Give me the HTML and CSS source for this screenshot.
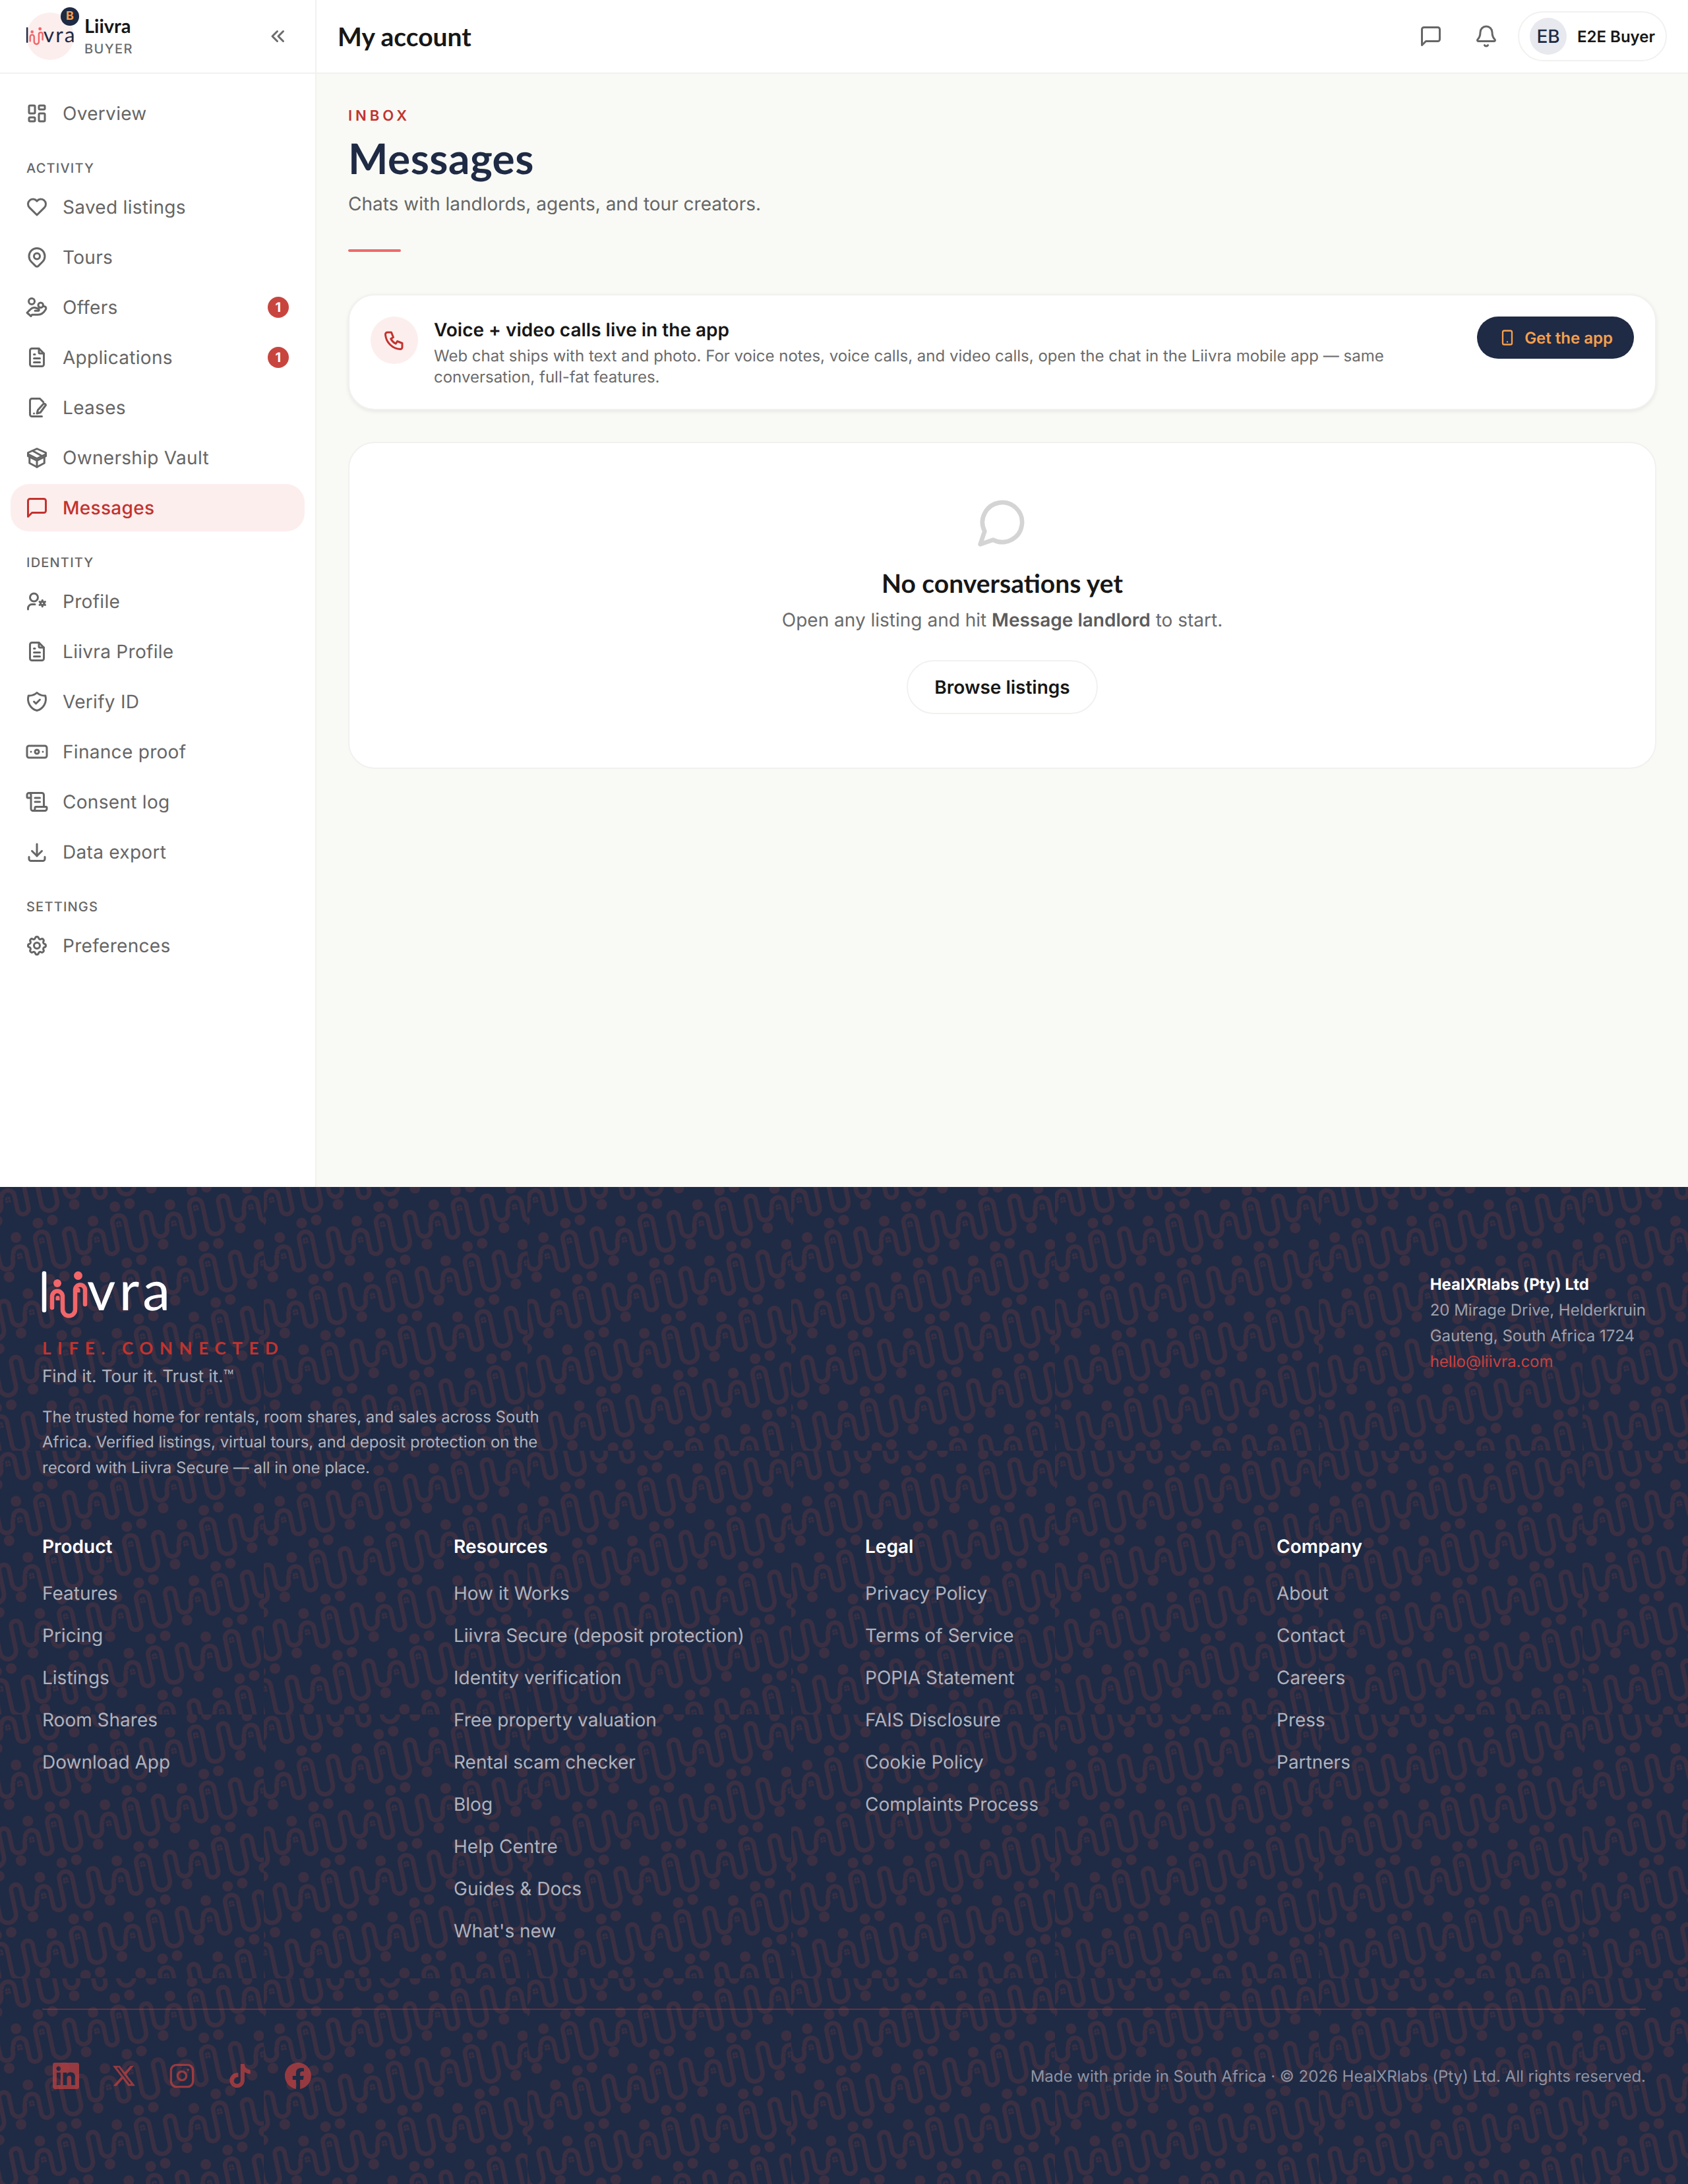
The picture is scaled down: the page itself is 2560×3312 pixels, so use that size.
FILE: index.html
```html
<!DOCTYPE html>
<html lang="en">
<head>
    <meta charset="UTF-8">
    <meta name="viewport" content="width=device-width, initial-scale=1.0">
    <title>Messages - Liivra</title>
    <link rel="stylesheet" href="styles.css">
</head>
<body>
    <div class="app">
        <aside class="sidebar">
            <div class="side-head">
                <div class="side-logo">
                    <svg class="logo-mark" viewBox="0 0 190 72" width="72" height="28">
                        <path class="logo-l" d="M3 3V59"/>
                        <circle class="logo-dot" cx="23" cy="18" r="6"/>
                        <circle class="logo-dot" cx="54.5" cy="6.5" r="6.5"/>
                        <path class="logo-body" d="M15 55V38a8 8 0 0 1 16 0V58a9.5 9.5 0 0 0 19 0V28a7.5 7.5 0 0 1 15 0V50"/>
                        <text class="logo-text" x="68" y="59" textLength="126">vra</text>
                    </svg>
                    <span class="role-dot">B</span>
                </div>
                <div class="brand">
                    <div class="brand-name">Liivra</div>
                    <div class="brand-role">BUYER</div>
                </div>
                <svg class="ic collapse" viewBox="0 0 24 24"><path d="M11 7l-5 5l5 5"/><path d="M17 7l-5 5l5 5"/></svg>
            </div>
            <nav class="nav">
                <a class="nav-item">
                    <svg class="ic" viewBox="0 0 24 24"><path d="M5 4h4a1 1 0 0 1 1 1v6a1 1 0 0 1 -1 1h-4a1 1 0 0 1 -1 -1v-6a1 1 0 0 1 1 -1"/><path d="M5 16h4a1 1 0 0 1 1 1v2a1 1 0 0 1 -1 1h-4a1 1 0 0 1 -1 -1v-2a1 1 0 0 1 1 -1"/><path d="M15 12h4a1 1 0 0 1 1 1v6a1 1 0 0 1 -1 1h-4a1 1 0 0 1 -1 -1v-6a1 1 0 0 1 1 -1"/><path d="M15 4h4a1 1 0 0 1 1 1v2a1 1 0 0 1 -1 1h-4a1 1 0 0 1 -1 -1v-2a1 1 0 0 1 1 -1"/></svg>
                    Overview
                </a>

                <div class="nav-label">ACTIVITY</div>
                <a class="nav-item">
                    <svg class="ic" viewBox="0 0 24 24"><path d="M19.5 12.572l-7.5 7.428l-7.5 -7.428a5 5 0 1 1 7.5 -6.566a5 5 0 1 1 7.5 6.572"/></svg>
                    Saved listings
                </a>
                <a class="nav-item">
                    <svg class="ic" viewBox="0 0 24 24"><path d="M9 11a3 3 0 1 0 6 0a3 3 0 0 0 -6 0"/><path d="M17.657 16.657l-4.243 4.243a2 2 0 0 1 -2.827 0l-4.244 -4.243a8 8 0 1 1 11.314 0z"/></svg>
                    Tours
                </a>
                <a class="nav-item">
                    <svg class="ic" viewBox="0 0 24 24"><circle cx="6.7" cy="6" r="3"/><circle cx="15.8" cy="9.8" r="2.5"/><path d="M4.5 15l-2.5 2.5l4 3.5l1 -1.5h6c3 0 6 -2 8 -5.5c.8 -1.8 -.5 -3 -2 -3"/><path d="M4.5 15c2 -2 4 -3 6 -2.5l3 1c1 .4 1 2 -.5 2h-3"/></svg>
                    Offers
                    <span class="count">1</span>
                </a>
                <a class="nav-item">
                    <svg class="ic" viewBox="0 0 24 24"><path d="M14 3v4a1 1 0 0 0 1 1h4"/><path d="M17 21h-10a2 2 0 0 1 -2 -2v-14a2 2 0 0 1 2 -2h7l5 5v11a2 2 0 0 1 -2 2z"/><path d="M9 9l1 0"/><path d="M9 13l6 0"/><path d="M9 17l6 0"/></svg>
                    Applications
                    <span class="count">1</span>
                </a>
                <a class="nav-item">
                    <svg class="ic" viewBox="0 0 24 24"><path d="M17 21h-10a2 2 0 0 1 -2 -2v-14a2 2 0 0 1 2 -2h8l3.500 3.500"/><path d="M21 9.500a1.600 1.600 0 0 0 -2.600 -1l-5.400 6l-1 3.500l3.500 -1z"/><path d="M9 18h.01"/></svg>
                    Leases
                </a>
                <a class="nav-item">
                    <svg class="ic" viewBox="0 0 24 24"><path d="M12 3l9 4v1.500l-9 4.500l-9 -4.500v-1.500z"/><path d="M3 8.500v2l9 4.500l9 -4.500v-2"/><path d="M4.500 12v5.500l7.500 4l7.500 -4v-5.500"/><path d="M12 15v6.500"/><path d="M7.500 5l9 5"/></svg>
                    Ownership Vault
                </a>
                <a class="nav-item active">
                    <svg class="ic" viewBox="0 0 24 24"><path d="M21 15a2 2 0 0 1-2 2H7l-4 4V5a2 2 0 0 1 2-2h14a2 2 0 0 1 2 2z"/></svg>
                    Messages
                </a>

                <div class="nav-label">IDENTITY</div>
                <a class="nav-item">
                    <svg class="ic" viewBox="0 0 24 24"><circle cx="9" cy="8" r="4"/><path d="M3 20v-1a4 4 0 0 1 4 -4h3"/><circle cx="17.500" cy="14" r="1.800"/><path d="M17.500 10.800v1.400"/><path d="M17.500 15.800v1.400"/><path d="M20.300 12.400l-1.200 .7"/><path d="M15.900 14.900l-1.200 .7"/><path d="M14.700 12.400l1.200 .7"/><path d="M19.100 14.900l1.200 .7"/></svg>
                    Profile
                </a>
                <a class="nav-item">
                    <svg class="ic" viewBox="0 0 24 24"><path d="M14 3v4a1 1 0 0 0 1 1h4"/><path d="M17 21h-10a2 2 0 0 1 -2 -2v-14a2 2 0 0 1 2 -2h7l5 5v11a2 2 0 0 1 -2 2z"/><path d="M9 9l1 0"/><path d="M9 13l6 0"/><path d="M9 17l6 0"/></svg>
                    Liivra Profile
                </a>
                <a class="nav-item">
                    <svg class="ic" viewBox="0 0 24 24"><path d="M12 3a12 12 0 0 0 8.500 3a12 12 0 0 1 -8.500 15a12 12 0 0 1 -8.500 -15a12 12 0 0 0 8.500 -3"/><path d="M9 12l2 2l4 -4"/></svg>
                    Verify ID
                </a>
                <a class="nav-item">
                    <svg class="ic" viewBox="0 0 24 24"><rect x="2" y="6" width="20" height="12" rx="2"/><circle cx="12" cy="12" r="2"/><path d="M6 12h.01M18 12h.01"/></svg>
                    Finance proof
                </a>
                <a class="nav-item">
                    <svg class="ic" viewBox="0 0 24 24"><path d="M15 12h-5"/><path d="M15 8h-5"/><path d="M19 17V5a2 2 0 0 0-2-2H4"/><path d="M8 21h12a2 2 0 0 0 2-2v-1a1 1 0 0 0-1-1H11a1 1 0 0 0-1 1v1a2 2 0 1 1-4 0V5a2 2 0 1 0-4 0v2a1 1 0 0 0 1 1h3"/></svg>
                    Consent log
                </a>
                <a class="nav-item">
                    <svg class="ic" viewBox="0 0 24 24"><path d="M4 17v2a2 2 0 0 0 2 2h12a2 2 0 0 0 2 -2v-2"/><path d="M7 11l5 5l5 -5"/><path d="M12 4l0 12"/></svg>
                    Data export
                </a>

                <div class="nav-label">SETTINGS</div>
                <a class="nav-item">
                    <svg class="ic" viewBox="0 0 24 24"><path d="M10.325 4.317c.426 -1.756 2.924 -1.756 3.350 0a1.724 1.724 0 0 0 2.573 1.066c1.543 -.940 3.310 .826 2.370 2.370a1.724 1.724 0 0 0 1.065 2.572c1.756 .426 1.756 2.924 0 3.350a1.724 1.724 0 0 0 -1.066 2.573c.940 1.543 -.826 3.310 -2.370 2.370a1.724 1.724 0 0 0 -2.572 1.065c-.426 1.756 -2.924 1.756 -3.350 0a1.724 1.724 0 0 0 -2.573 -1.066c-1.543 .940 -3.310 -.826 -2.370 -2.370a1.724 1.724 0 0 0 -1.065 -2.572c-1.756 -.426 -1.756 -2.924 0 -3.350a1.724 1.724 0 0 0 1.066 -2.573c-.940 -1.543 .826 -3.310 2.370 -2.370c1 .608 2.296 .070 2.572 -1.065z"/><path d="M9 12a3 3 0 1 0 6 0a3 3 0 0 0 -6 0"/></svg>
                    Preferences
                </a>
            </nav>
        </aside>

        <div class="main">
            <header class="topbar">
                <div class="topbar-title">My account</div>
                <div class="topbar-right">
                    <span class="top-btn">
                        <svg class="ic" viewBox="0 0 24 24"><path d="M21 15a2 2 0 0 1-2 2H7l-4 4V5a2 2 0 0 1 2-2h14a2 2 0 0 1 2 2z"/></svg>
                    </span>
                    <span class="top-btn">
                        <svg class="ic" viewBox="0 0 24 24"><path d="M10.268 21a2 2 0 0 0 3.464 0"/><path d="M3.262 15.326A1 1 0 0 0 4 17h16a1 1 0 0 0 .74-1.673C19.410 13.956 18 12.499 18 8A6 6 0 0 0 6 8c0 4.499-1.411 5.956-2.738 7.326"/></svg>
                    </span>
                    <div class="user-pill">
                        <span class="avatar">EB</span>
                        <span class="user-name">E2E Buyer</span>
                    </div>
                </div>
            </header>

            <main class="content">
                <div class="eyebrow">INBOX</div>
                <h1 class="page-title">Messages</h1>
                <p class="page-sub">Chats with landlords, agents, and tour creators.</p>
                <div class="title-rule"></div>

                <section class="banner">
                    <span class="banner-icon">
                        <svg class="ic" viewBox="0 0 24 24"><path d="M5 4h4l2 5l-2.500 1.500a11 11 0 0 0 5 5l1.500 -2.500l5 2v4a2 2 0 0 1 -2 2a16 16 0 0 1 -15 -15a2 2 0 0 1 2 -2"/></svg>
                    </span>
                    <div class="banner-text">
                        <div class="banner-title">Voice + video calls live in the app</div>
                        <p class="banner-desc">Web chat ships with text and photo. For voice notes, voice calls, and video calls, open the chat in the Liivra mobile app — same conversation, full-fat features.</p>
                    </div>
                    <a class="app-btn">
                        <svg class="ic" viewBox="0 0 24 24"><rect x="6" y="3" width="12" height="18" rx="2"/><path d="M12 17.500h.01"/></svg>
                        Get the app
                    </a>
                </section>

                <section class="empty">
                    <svg class="ic empty-icon" viewBox="0 0 24 24"><path d="M7.900 20A9 9 0 1 0 4 16.100L2 22Z"/></svg>
                    <h2 class="empty-title">No conversations yet</h2>
                    <p class="empty-sub">Open any listing and hit <strong>Message landlord</strong> to start.</p>
                    <a class="browse-btn">Browse listings</a>
                </section>
            </main>
        </div>
    </div>

    <footer class="footer">
        <div class="footer-top">
            <div class="footer-brand">
                <svg class="logo-mark logo-light" viewBox="0 0 190 72" width="190" height="72">
                    <path class="logo-l" d="M3 3V59"/>
                    <circle class="logo-dot" cx="23" cy="18" r="6"/>
                    <circle class="logo-dot" cx="54.500" cy="6.500" r="6.500"/>
                    <path class="logo-body" d="M15 55V38a8 8 0 0 1 16 0V58a9.500 9.500 0 0 0 19 0V28a7.500 7.500 0 0 1 15 0V50"/>
                    <path class="logo-dot" d="M20.500 44v-4a3 3 0 0 1 6 0v4zM51.500 32v-4a3 3 0 0 1 6 0v4z"/>
                    <text class="logo-text" x="68" y="59" textLength="126">vra</text>
                </svg>
                <div class="life">LIFE. CONNECTED</div>
                <div class="find">Find it. Tour it. Trust it.™</div>
                <p class="about">The trusted home for rentals, room shares, and sales across South Africa. Verified listings, virtual tours, and deposit protection on the record with Liivra Secure — all in one place.</p>
            </div>
            <div class="company">
                <div class="company-name">HealXRlabs (Pty) Ltd</div>
                <div>20 Mirage Drive, Helderkruin</div>
                <div>Gauteng, South Africa 1724</div>
                <a class="company-mail">hello@liivra.com</a>
            </div>
        </div>

        <div class="footer-cols">
            <div class="col">
                <h4>Product</h4>
                <a>Features</a>
                <a>Pricing</a>
                <a>Listings</a>
                <a>Room Shares</a>
                <a>Download App</a>
            </div>
            <div class="col">
                <h4>Resources</h4>
                <a>How it Works</a>
                <a>Liivra Secure (deposit protection)</a>
                <a>Identity verification</a>
                <a>Free property valuation</a>
                <a>Rental scam checker</a>
                <a>Blog</a>
                <a>Help Centre</a>
                <a>Guides &amp; Docs</a>
                <a>What's new</a>
            </div>
            <div class="col">
                <h4>Legal</h4>
                <a>Privacy Policy</a>
                <a>Terms of Service</a>
                <a>POPIA Statement</a>
                <a>FAIS Disclosure</a>
                <a>Cookie Policy</a>
                <a>Complaints Process</a>
            </div>
            <div class="col">
                <h4>Company</h4>
                <a>About</a>
                <a>Contact</a>
                <a>Careers</a>
                <a>Press</a>
                <a>Partners</a>
            </div>
        </div>

        <div class="footer-bottom">
            <div class="socials">
                <a class="social"><svg class="solid" viewBox="0 0 24 24" width="40" height="40"><path d="M20.447 20.452h-3.554v-5.569c0-1.328-.027-3.037-1.852-3.037-1.853 0-2.136 1.445-2.136 2.939v5.667H9.351V9h3.414v1.561h.046c.477-.9 1.637-1.85 3.37-1.85 3.601 0 4.267 2.37 4.267 5.455v6.286zM5.337 7.433c-1.144 0-2.063-.926-2.063-2.065 0-1.138.92-2.063 2.063-2.063 1.14 0 2.064.925 2.064 2.063 0 1.139-.925 2.065-2.064 2.065zm1.782 13.019H3.555V9h3.564v11.452zM22.225 0H1.771C.792 0 0 .774 0 1.729v20.542C0 23.227.792 24 1.771 24h20.451C23.2 24 24 23.227 24 22.271V1.729C24 .774 23.2 0 22.222 0h.003z"/></svg></a>
                <a class="social"><svg class="solid" viewBox="0 0 24 24" width="34" height="34"><path d="M18.901 1.153h3.68l-8.04 9.19L24 22.846h-7.406l-5.8-7.584-6.638 7.584H.474l8.6-9.83L0 1.154h7.594l5.243 6.932ZM17.61 20.644h2.039L6.486 3.24H4.298Z"/></svg></a>
                <a class="social"><svg class="line" viewBox="0 0 24 24" width="40" height="40"><rect x="2" y="2" width="20" height="20" rx="5"/><circle cx="12" cy="12" r="4"/><path d="M17.500 6.500h.01"/></svg></a>
                <a class="social"><svg class="solid" viewBox="0 0 24 24" width="36" height="36"><path d="M12.525.02c1.31-.02 2.61-.01 3.91-.02.08 1.53.63 3.09 1.75 4.17 1.12 1.11 2.7 1.62 4.24 1.79v4.03c-1.44-.05-2.89-.35-4.2-.97-.57-.26-1.1-.59-1.62-.93-.01 2.92.01 5.84-.02 8.75-.08 1.4-.54 2.79-1.35 3.94-1.31 1.92-3.58 3.17-5.91 3.21-1.43.08-2.86-.31-4.08-1.03-2.02-1.19-3.44-3.37-3.65-5.71-.02-.5-.03-1-.01-1.49.18-1.9 1.12-3.72 2.58-4.96 1.66-1.44 3.98-2.13 6.15-1.72.02 1.48-.04 2.96-.04 4.44-.99-.32-2.15-.23-3.02.37-.63.41-1.11 1.04-1.36 1.75-.21.51-.15 1.07-.14 1.61.24 1.64 1.82 3.02 3.5 2.87 1.12-.01 2.19-.66 2.77-1.61.19-.33.4-.67.41-1.06.1-1.79.06-3.57.07-5.36.01-4.03-.01-8.05.02-12.07z"/></svg></a>
                <a class="social"><svg class="solid" viewBox="0 0 24 24" width="40" height="40"><path d="M24 12.073c0-6.627-5.373-12-12-12s-12 5.373-12 12c0 5.99 4.388 10.954 10.125 11.854v-8.385H7.078v-3.47h3.047V9.43c0-3.007 1.792-4.669 4.533-4.669 1.312 0 2.686.235 2.686.235v2.953H15.83c-1.491 0-1.956.925-1.956 1.874v2.25h3.328l-.532 3.47h-2.796v8.385C19.612 23.027 24 18.062 24 12.073z"/></svg></a>
            </div>
            <div class="copyright">Made with pride in South Africa · © 2026 HealXRlabs (Pty) Ltd. All rights reserved.</div>
        </div>
    </footer>
</body>
</html>
```

FILE: styles.css
```css
* {
    box-sizing: border-box;
}
body {
    margin: 0;
    font-family: Inter, "Liberation Sans", sans-serif;
    color: #171717;
    background-color: #fff;
    text-rendering: geometricPrecision;
}
h1, h2, h4, p {
    margin: 0;
}

/* icons */
.ic {
    width: 36px;
    height: 36px;
    flex: none;
    fill: none;
    stroke: currentColor;
    stroke-width: 2;
    stroke-linecap: round;
    stroke-linejoin: round;
}

/* logo */
.logo-mark {
    display: block;
    flex: none;
    overflow: visible;
}
.logo-l {
    fill: none;
    stroke: #1f2a44;
    stroke-width: 6.5;
    stroke-linecap: round;
}
.logo-dot {
    fill: #f2666a;
}
.logo-body {
    fill: none;
    stroke: #f2666a;
    stroke-width: 6.5;
    stroke-linecap: round;
    stroke-linejoin: round;
}
.logo-text {
    font-family: Lato, "Liberation Sans", sans-serif;
    font-size: 84px;
    fill: #1f2a44;
}
.logo-light .logo-l {
    stroke: #fff;
}
.logo-light .logo-text {
    fill: #fff;
}

/* layout */
.app {
    display: flex;
    min-height: 1800px;
}
.sidebar {
    width: 480px;
    flex: none;
    background-color: #fff;
    border-right: 2px solid #f1f1ef;
}
.main {
    flex: 1;
    min-width: 0;
    background-color: #f9faf6;
}

/* sidebar */
.side-head {
    height: 112px;
    display: flex;
    align-items: center;
    padding: 0 38px 0 40px;
    border-bottom: 2px solid #f1f1ef;
}
.side-logo {
    position: relative;
    width: 72px;
    height: 72px;
    flex: none;
    display: flex;
    align-items: center;
    border-radius: 50%;
    background-color: #fdeeee;
}
.role-dot {
    position: absolute;
    top: -8px;
    right: -8px;
    width: 28px;
    height: 28px;
    border-radius: 50%;
    background-color: #1f2a44;
    color: #f6a04d;
    font-size: 18px;
    font-weight: 700;
    line-height: 28px;
    text-align: center;
}
.brand {
    margin-left: 16px;
}
.brand-name {
    font-family: Lato, "Liberation Sans", sans-serif;
    font-size: 29px;
    font-weight: 700;
    line-height: 34px;
    color: #171717;
}
.brand-role {
    margin-top: 3px;
    font-size: 20px;
    font-weight: 500;
    line-height: 28px;
    letter-spacing: 1.4px;
    color: #6b6b6b;
}
.collapse {
    margin-left: auto;
    color: #6b6b6b;
}
.nav {
    padding: 24px 16px;
}
.nav-item {
    height: 72px;
    display: flex;
    align-items: center;
    gap: 21px;
    padding: 0 24px 0 22px;
    border-radius: 28px;
    font-size: 28px;
    letter-spacing: 0.3px;
    color: #666;
}
.nav-item + .nav-item {
    margin-top: 4px;
}
.nav-item.active {
    background-color: #fdeeee;
    color: #c2332e;
    font-weight: 500;
}
.nav-label {
    margin: 32px 0 8px;
    padding-left: 24px;
    font-size: 20px;
    font-weight: 500;
    line-height: 30px;
    letter-spacing: 1.2px;
    color: #666;
}
.count {
    margin-left: auto;
    width: 32px;
    height: 32px;
    border-radius: 50%;
    background-color: #c8453f;
    color: #fff;
    font-size: 20px;
    font-weight: 700;
    line-height: 32px;
    text-align: center;
}

/* top bar */
.topbar {
    height: 112px;
    display: flex;
    align-items: center;
    justify-content: space-between;
    padding: 0 32px;
    background-color: #fff;
    border-bottom: 2px solid #f1f1ef;
}
.topbar-title {
    padding-top: 2px;
    font-family: Lato, "Liberation Sans", sans-serif;
    font-size: 39px;
    font-weight: 700;
    color: #171717;
}
.topbar-right {
    display: flex;
    align-items: center;
    gap: 12px;
}
.top-btn {
    width: 72px;
    height: 72px;
    display: flex;
    align-items: center;
    justify-content: center;
    color: #666;
}
.user-pill {
    height: 76px;
    display: flex;
    align-items: center;
    gap: 16px;
    padding: 0 16px;
    border: 2px solid #f1f1ef;
    border-radius: 38px;
}
.avatar {
    width: 56px;
    height: 56px;
    border-radius: 50%;
    background-color: #e8e9ee;
    color: #1f2a44;
    font-size: 28px;
    font-weight: 500;
    line-height: 56px;
    text-align: center;
}
.user-name {
    font-size: 24px;
    font-weight: 600;
}

/* page */
.content {
    padding: 48px;
}
.eyebrow {
    font-size: 22px;
    font-weight: 600;
    line-height: 32px;
    letter-spacing: 5px;
    color: #c2332e;
}
.page-title {
    margin-top: 12px;
    font-family: Lato, "Liberation Sans", sans-serif;
    font-size: 64px;
    font-weight: 700;
    line-height: 72px;
    letter-spacing: 0.5px;
    color: #1f2a44;
}
.page-sub {
    margin-top: 12px;
    font-size: 28px;
    line-height: 42px;
    color: #666;
}
.title-rule {
    width: 80px;
    height: 4px;
    margin-top: 48px;
    border-radius: 2px;
    background-color: #ee6a6a;
}

/* app banner */
.banner {
    margin-top: 64px;
    display: flex;
    align-items: flex-start;
    gap: 24px;
    padding: 32px;
    background-color: #fff;
    border: 2px solid #f1f1ef;
    border-radius: 40px;
    box-shadow: 0 2px 6px rgba(0, 0, 0, 0.08);
}
.banner-icon {
    width: 72px;
    height: 72px;
    flex: none;
    display: flex;
    align-items: center;
    justify-content: center;
    border-radius: 50%;
    background-color: #fdeeee;
    color: #c2332e;
}
.banner-text {
    flex: 1;
    min-width: 0;
}
.banner-title {
    font-size: 28px;
    font-weight: 600;
    line-height: 40px;
}
.banner-desc {
    margin-top: 4px;
    font-size: 24px;
    line-height: 32px;
    color: #6b6b6b;
}
.app-btn {
    height: 64px;
    flex: none;
    display: flex;
    align-items: center;
    gap: 12px;
    margin-left: 8px;
    padding: 0 32px;
    border-radius: 32px;
    background-color: #1f2a44;
    color: #f6a04d;
    font-size: 24px;
    font-weight: 600;
}
.app-btn .ic {
    width: 28px;
    height: 28px;
}

/* empty state */
.empty {
    margin-top: 48px;
    display: flex;
    flex-direction: column;
    align-items: center;
    padding: 80px 30px 81px;
    background-color: #fff;
    border: 2px solid #f1f1ef;
    border-radius: 40px;
}
.empty-icon {
    width: 80px;
    height: 80px;
    color: #d4d4d4;
}
.empty-title {
    margin-top: 29px;
    font-family: Lato, "Liberation Sans", sans-serif;
    font-size: 39px;
    font-weight: 700;
    line-height: 48px;
}
.empty-sub {
    margin-top: 10px;
    font-size: 28px;
    line-height: 42px;
    color: #6b6b6b;
}
.empty-sub strong {
    font-weight: 600;
    color: #5c5c5c;
}
.browse-btn {
    height: 82px;
    margin-top: 40px;
    display: flex;
    align-items: center;
    padding: 0 40px;
    border: 2px solid #f1f1ef;
    border-radius: 41px;
    font-size: 28px;
    font-weight: 600;
}

/* footer */
.footer {
    height: 1512px;
    padding: 128px 64px 0;
    background-color: #1f2a44;
    background-image: url("data:image/svg+xml,%3Csvg xmlns='http://www.w3.org/2000/svg' width='400' height='400'%3E%3Cdefs%3E%3Cg id='m'%3E%3Cpath d='M-10 10a10 10 0 0 1 20 0V32a8.5 8.5 0 0 0 17 0V-5a10 10 0 0 1 20 0V31.25a12.25 12.25 0 0 0 24.5 0V-3.6a7.5 7.5 0 0 1 15 0V20a10 10 0 0 0 20 0Q106.5 14 109.4 10' fill='none' stroke='%233b3043' stroke-width='6.6'/%3E%3Cg fill='%233b3043'%3E%3Ccircle cx='-1' cy='-14.5' r='8'/%3E%3Ccircle cx='36' cy='-28.8' r='8'/%3E%3Ccircle cx='58.6' cy='-28.8' r='8'/%3E%3Ccircle cx='95.8' cy='42' r='8'/%3E%3Cpath d='M-5.1 18.4v-5a4 4 0 0 1 8 0v5zM32.3 2.5v-5a4 4 0 0 1 8 0v5z'/%3E%3C/g%3E%3Cpath d='M-1.1 9.4v9M-5.1 14.4h8M36.3 -6.5v9M32.3 -1.5h8' stroke='%231f2a44' stroke-width='1'/%3E%3C/g%3E%3Cpattern id='p' width='119.4' height='87' patternUnits='userSpaceOnUse' patternTransform='translate(145 65.67) rotate(-12) translate(-20 -37)'%3E%3Cg transform='translate(20 37)'%3E%3Cuse href='%23m'/%3E%3Cuse href='%23m' x='119.4'/%3E%3Cuse href='%23m' x='-119.4'/%3E%3C/g%3E%3C/pattern%3E%3C/defs%3E%3Crect width='400' height='400' fill='url(%23p)'/%3E%3C/svg%3E");
    background-size: 400px 400px;
}
.footer-top {
    display: flex;
    justify-content: space-between;
    align-items: flex-start;
}
.footer-brand {
    width: 800px;
}
.life {
    margin-top: 26px;
    font-family: Lato, "Liberation Sans", sans-serif;
    font-size: 26px;
    font-weight: 700;
    line-height: 36px;
    letter-spacing: 9.6px;
    color: #c2332e;
}
.find {
    margin-top: 6px;
    font-size: 26px;
    line-height: 39px;
    color: #aeb2bd;
}
.about {
    margin-top: 23px;
    font-size: 24px;
    line-height: 38.4px;
    color: #aeb2bd;
}
.company {
    font-size: 24px;
    line-height: 39px;
    color: #9da1ae;
}
.company-name {
    font-weight: 700;
    color: #fff;
}
.company-mail {
    color: #c8413f;
}
.footer-cols {
    display: grid;
    grid-template-columns: repeat(4, 1fr);
    gap: 64px;
    margin-top: 80px;
}
.col {
    display: flex;
    flex-direction: column;
    gap: 24px;
}
.col h4 {
    margin-bottom: 7px;
    font-size: 28px;
    font-weight: 600;
    line-height: 40px;
    color: #fff;
}
.col a {
    font-size: 28px;
    line-height: 40px;
    color: #aeb2bd;
}
.footer-bottom {
    margin-top: 98px;
    padding-top: 64px;
    border-top: 2px solid rgba(200, 65, 63, 0.4);
    display: flex;
    align-items: center;
    justify-content: space-between;
}
.socials {
    display: flex;
    gap: 16px;
}
.social {
    width: 72px;
    height: 72px;
    display: flex;
    align-items: center;
    justify-content: center;
    opacity: 0.7;
}
.solid {
    fill: #c8413f;
}
.line {
    fill: none;
    stroke: #c8413f;
    stroke-width: 2;
    stroke-linecap: round;
    stroke-linejoin: round;
}
.copyright {
    font-size: 24px;
    color: #8e93a3;
}
```
